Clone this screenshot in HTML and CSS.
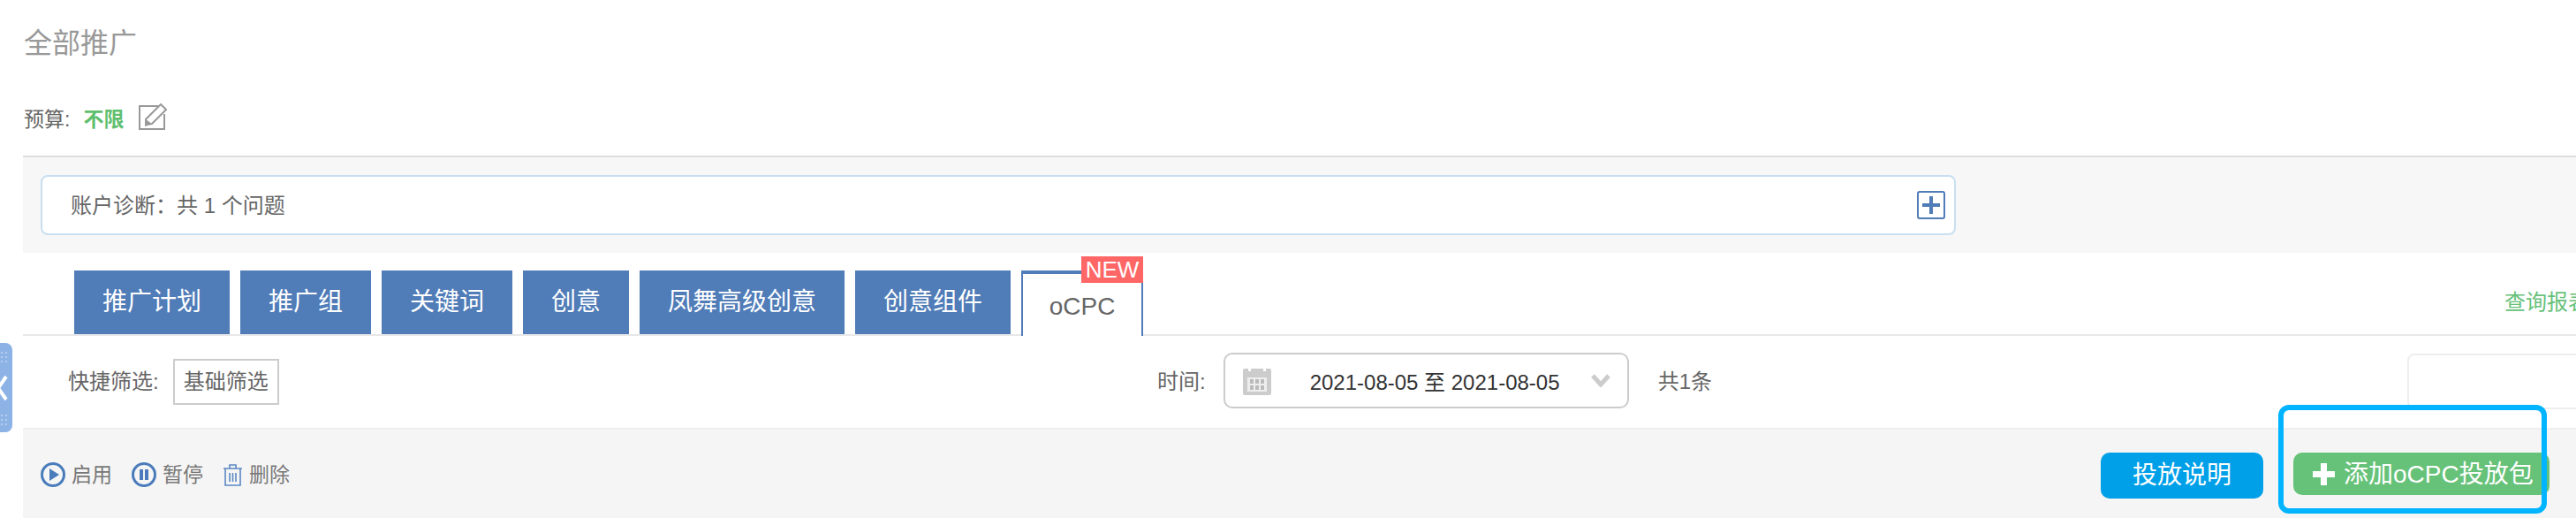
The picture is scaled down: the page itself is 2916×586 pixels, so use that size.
FILE: index.html
```html
<!DOCTYPE html>
<html lang="zh-CN">
<head>
  <meta charset="UTF-8">
  <title>全部推广</title>
  <link rel="stylesheet" href="styles.css">
</head>
<body>

<!-- sidebar toggle -->
<div class="side-toggle">
  <svg width="14" height="101" viewBox="0 0 14 101">
    <path d="M7 38 L-2 51 L7 64" fill="none" stroke="#fff" stroke-width="4"/>
    <g fill="#b4cdee">
      <rect x="1" y="10" width="2" height="2"/><rect x="6" y="10" width="2" height="2"/>
      <rect x="1" y="15" width="2" height="2"/><rect x="6" y="15" width="2" height="2"/>
      <rect x="1" y="20" width="2" height="2"/><rect x="6" y="20" width="2" height="2"/>
      <rect x="1" y="81" width="2" height="2"/><rect x="6" y="81" width="2" height="2"/>
      <rect x="1" y="86" width="2" height="2"/><rect x="6" y="86" width="2" height="2"/>
      <rect x="1" y="91" width="2" height="2"/><rect x="6" y="91" width="2" height="2"/>
    </g>
  </svg>
</div>

<div class="main">
  <h1 class="title">全部推广</h1>

  <div class="budget">
    <span>预算:</span>
    <span class="budget-value">不限</span>
    <svg class="edit-icon" width="32" height="31" viewBox="0 0 32 31">
      <path d="M22 3 H1 V29 H29 V12" fill="none" stroke="#999" stroke-width="2"/>
      <path d="M25 1 L31 7 L15 23 L8 24 L8 18 Z" fill="none" stroke="#999" stroke-width="2"/>
      <path d="M8 18 L15 23 L7 26 Z" fill="#999"/>
    </svg>
  </div>

  <div class="diag-panel">
    <div class="diag-box">
      <span class="diag-text">账户诊断：共 1 个问题</span>
      <span class="diag-plus">
        <svg width="22" height="22" viewBox="0 0 22 22"><path d="M11 1 V21 M1 11 H21" stroke="#507cb8" stroke-width="4"/></svg>
      </span>
    </div>
  </div>

  <div class="tabs-row">
    <a class="tab">推广计划</a>
    <a class="tab">推广组</a>
    <a class="tab">关键词</a>
    <a class="tab">创意</a>
    <a class="tab">凤舞高级创意</a>
    <a class="tab">创意组件</a>
    <a class="tab tab-active">oCPC<span class="new-badge">NEW</span></a>
    <a class="report-link">查询报表</a>
  </div>

  <div class="filter-row">
    <div class="quick-filter">
      <span>快捷筛选:</span>
      <span class="filter-btn">基础筛选</span>
    </div>
    <div class="time-filter">
      <span>时间:</span>
      <div class="date-box">
        <svg width="32" height="32" viewBox="0 0 32 32">
          <path d="M2 2 H6 V5 H9 V2 H23 V5 H26 V2 H30 Q32 2 32 4 V30 Q32 32 30 32 H2 Q0 32 0 30 V4 Q0 2 2 2 Z" fill="#ccc"/>
          <rect x="5" y="12" width="22" height="16" fill="#eee"/>
          <g fill="#bbb">
            <rect x="8" y="14" width="4" height="5"/><rect x="14" y="14" width="4" height="5"/><rect x="20" y="14" width="4" height="5"/>
            <rect x="8" y="21" width="4" height="5"/><rect x="14" y="21" width="4" height="5"/><rect x="20" y="21" width="4" height="5"/>
          </g>
        </svg>
        <span class="date-text">2021-08-05 至 2021-08-05</span>
        <svg width="22" height="15" viewBox="0 0 22 15"><path d="M2 2 L11 12 L20 2" fill="none" stroke="#ccc" stroke-width="5"/></svg>
      </div>
      <span class="total">共1条</span>
    </div>
    <div class="search-box"></div>
  </div>

  <div class="action-row">
    <div class="actions">
      <a class="action">
        <svg width="28" height="28" viewBox="0 0 28 28"><circle cx="14" cy="14" r="12.5" fill="none" stroke="#4a7cbb" stroke-width="3"/><path d="M10 7 L21 14 L10 21 Z" fill="#4a7cbb"/></svg>
        启用
      </a>
      <a class="action">
        <svg width="28" height="28" viewBox="0 0 28 28"><circle cx="14" cy="14" r="12.5" fill="none" stroke="#4a7cbb" stroke-width="3"/><rect x="9" y="8" width="4" height="12" fill="#4a7cbb"/><rect x="15" y="8" width="4" height="12" fill="#4a7cbb"/></svg>
        暂停
      </a>
      <a class="action">
        <svg width="23" height="25" viewBox="0 0 23 25"><path d="M1 5 H22 M8 5 V1 H15 V5 M3 5 V24 H20 V5 M8 10 V20 M11.5 10 V20 M15 10 V20" fill="none" stroke="#5b88c2" stroke-width="1.6"/></svg>
        删除
      </a>
    </div>
    <div class="buttons">
      <a class="btn btn-blue">投放说明</a>
      <a class="btn btn-green">
        <svg width="25" height="25" viewBox="0 0 25 25"><path d="M12.5 0 V25 M0 12.5 H25" stroke="#fff" stroke-width="7"/></svg>
        <span class="btn-label">添加oCPC投放包</span>
      </a>
    </div>
  </div>
</div>

<!-- highlight drawn over the screenshot -->
<div class="highlight"></div>

</body>
</html>
```

FILE: styles.css
```css
html, body { margin: 0; height: 586px; overflow: hidden; }
body {
  position: relative; background: #fff; color: #666;
  font-family: "Liberation Sans", "Noto Sans CJK SC", sans-serif; font-size: 24px;
}
a { display: block; }

.side-toggle {
  position: absolute; left: 0; top: 388px; width: 14px; height: 101px;
  background: #8db3e6; border-radius: 0 8px 8px 0; overflow: hidden;
}
.side-toggle svg { display: block; }

.main { margin-left: 26px; width: 2890px; }

.title {
  margin: 0; height: 117px; padding: 31px 0 0 1px; box-sizing: border-box;
  font-size: 32px; font-weight: normal; line-height: 36px; color: #999;
}
.budget { height: 59px; display: flex; align-items: flex-start; padding-left: 1px; font-size: 23px; line-height: 36px; }
.budget-value { margin-left: 15px; color: #5fbf6e; font-weight: bold; }
.edit-icon { margin-left: 17px; }

.diag-panel {
  height: 110px; box-sizing: border-box; padding: 20px 0 0 20px;
  background: #f7f7f7; border-top: 2px solid #ddd;
}
.diag-box {
  width: 2168px; height: 68px; box-sizing: border-box;
  display: flex; align-items: center; justify-content: space-between; padding: 0 10px 0 32px;
  background: #fff; border: 2px solid #c9dff0; border-radius: 8px;
}
.diag-text { margin-bottom: 4px; }
.diag-plus {
  width: 32px; height: 32px; box-sizing: border-box;
  display: flex; align-items: center; justify-content: center;
  border: 2px solid #507cb8; border-radius: 3px;
}

.tabs-row {
  height: 94px; box-sizing: border-box; padding: 20px 0 0 58px;
  display: flex; gap: 12px; border-bottom: 2px solid #e8e8e8; position: relative;
}
.tab {
  height: 72px; box-sizing: border-box; padding: 0 32px;
  background: #507cb8; color: #fff; font-size: 28px; line-height: 72px;
}
.tab-active {
  position: relative; height: 74px; width: 138px; padding: 0; z-index: 1; margin-bottom: -2px;
  background: #fff; color: #666; line-height: 74px; text-align: center;
  border: 2px solid #507cb8; border-top-width: 4px; border-bottom: 0;
}
.new-badge {
  position: absolute; right: -2px; top: -20px; width: 70px; height: 30px;
  background: #ff6666; color: #fff; font-size: 26px; line-height: 30px; text-align: center;
}
.report-link { position: absolute; left: 2809px; top: 38px; color: #67c17a; font-size: 24px; line-height: 36px; white-space: nowrap; }

.filter-row {
  height: 106px; box-sizing: border-box; position: relative;
  display: flex; align-items: center; border-bottom: 2px solid #eee;
}
.quick-filter { width: 1284px; display: flex; align-items: center; gap: 16px; padding-left: 51px; box-sizing: border-box; flex: none; margin-top: -5px; }
.filter-btn {
  height: 52px; width: 120px; box-sizing: border-box; text-align: center;
  border: 2px solid #ccc; line-height: 48px; margin-top: 5px; flex: none;
}
.time-filter { display: flex; align-items: center; flex: none; margin-top: -5px; }
.date-box {
  width: 459px; height: 63px; box-sizing: border-box; margin: 2px 33px 0 20px;
  display: flex; align-items: center; padding: 0 19px 0 20px;
  border: 2px solid #ccc; border-radius: 10px;
}
.date-text { flex: 1; margin-left: 44px; color: #333; font-size: 24px; white-space: nowrap; }
.search-box {
  position: absolute; left: 2699px; top: 20px; width: 300px; height: 63px; box-sizing: border-box;
  border: 2px solid #eee; border-radius: 8px;
}

.action-row {
  height: 100px; box-sizing: border-box; background: #f5f5f5;
  display: flex; justify-content: space-between; align-items: flex-start;
}
.actions { display: flex; gap: 22px; padding: 37px 0 0 20px; font-size: 23px; }
.action { display: flex; align-items: center; gap: 7px; color: #777; line-height: 28px; }
.buttons { display: flex; gap: 34px; padding: 26px 30px 0 0; }
.btn { color: #fff; box-sizing: border-box; border-radius: 10px; white-space: nowrap; }
.btn-blue { width: 184px; height: 52px; background: #00a0e9; font-size: 28px; line-height: 52px; text-align: center; }
.btn-green {
  width: 290px; height: 48px; padding-left: 22px;
  display: flex; align-items: center; gap: 10px;
  background: #67c279; font-size: 28px;
}
.btn-label { margin-bottom: 4px; }

.highlight {
  position: absolute; left: 2579px; top: 458px; width: 304px; height: 123px; box-sizing: border-box;
  border: 6px solid #00b4ff; border-radius: 12px;
}
```
